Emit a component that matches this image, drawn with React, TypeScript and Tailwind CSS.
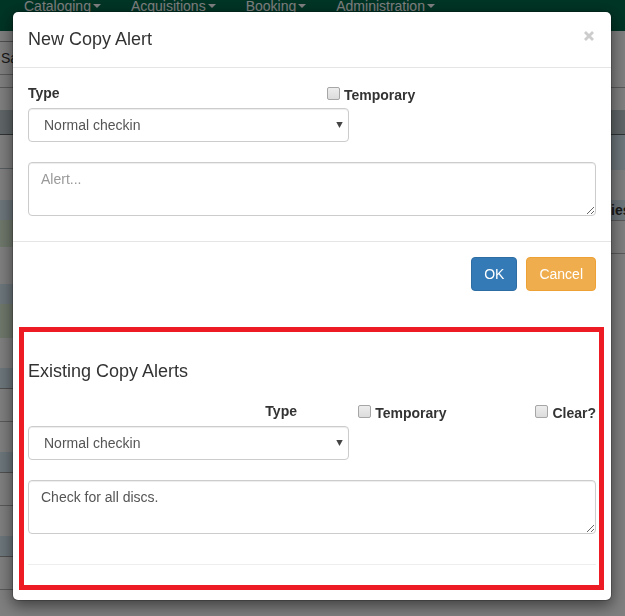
import { useId, useState } from "react";
import clsx from "clsx";

const menus = ["Cataloging", "Acquisitions", "Booking", "Administration"];

const leftBands = [
  "h-[11px] border-b border-[#a0a0a0] bg-white",
  "h-[33px] border-b border-[#b4b4b4] bg-white",
  "h-[13px] border-b border-[#b4b4b4] bg-white",
  "h-[22px] bg-white",
  "h-[25px] border-b border-[#606868] bg-[#bfcccf]",
  "h-[34px] border-b border-[#b0bcc0] bg-white",
  "h-[31px] bg-white",
  "h-5 bg-[#d9edf7]",
  "h-[27px] bg-[#dff0d8]",
  "h-[37px] bg-white",
  "h-5 bg-[#d9edf7]",
  "h-[34px] bg-[#dff0d8]",
  "h-[30px] bg-white",
  "h-[21px] border-b border-[#a0a0a0] bg-[#d9edf7]",
  "h-[33px] border-b border-[#b4b4b4] bg-white",
  "h-[30px] bg-white",
  "h-[21px] border-b border-[#a0a0a0] bg-[#d9edf7]",
  "h-[33px] border-b border-[#b4b4b4] bg-white",
  "h-[30px] bg-white",
  "h-[21px] border-b border-[#a0a0a0] bg-[#d9edf7]",
  "h-[33px] border-b border-[#b4b4b4] bg-white",
];

const rightBands = [
  "h-[57px] border-b border-[#b4b4b4] bg-white",
  "h-[22px] bg-white",
  "h-[25px] border-b border-[#606868] bg-[#bfcccf]",
  "h-[35px] bg-[#d9edf7]",
  "h-[30px] bg-white",
  "h-[21px] border-b border-[#b4b4b4] bg-[#d9edf7]",
  "h-[33px] border-b border-[#b4b4b4] bg-white",
];

function CatalogPage() {
  return (
    <div className="h-screen overflow-hidden bg-white">
      <nav className="flex h-[31px] bg-[#00694b] pl-[9px]">
        {menus.map((name) => (
          <a key={name} href="#" className="-mt-1 flex h-5 items-center gap-0.5 px-[15px] text-white">
            {name}
            <svg width="8" height="4" viewBox="0 0 8 4" fill="currentColor" aria-hidden="true">
              <path d="M0 0h8L4 4z" />
            </svg>
          </a>
        ))}
      </nav>
      <div className="flex">
        <div className="flex-1">
          {leftBands.map((band, i) => (
            <div key={i} className={clsx("flex items-center pl-px", band)}>
              {i === 1 && "Sa"}
            </div>
          ))}
        </div>
        <div className="w-3.5">
          {rightBands.map((band, i) => (
            <div key={i} className={clsx("flex items-center font-bold", band)}>
              {i === 5 && "ies"}
            </div>
          ))}
        </div>
      </div>
    </div>
  );
}

function CheckField({ label }: { label: string }) {
  return (
    <label className="flex gap-1 font-bold">
      <input
        type="checkbox"
        className="mt-1 size-[13px] shrink-0 appearance-none rounded-[2px] border border-[#a6a6a6] bg-linear-to-b from-[#ededed] to-[#dcdcdc] checked:bg-[#337ab7]"
      />
      <span className="mt-0.5">{label}</span>
    </label>
  );
}

function TypeSelect({ id }: { id: string }) {
  return (
    <div className="relative w-[321px] max-w-full">
      <select
        id={id}
        className="block h-[34px] w-full appearance-none rounded-[4px] border border-[#ccc] bg-white pr-6 pl-[15px] text-[#555] shadow-[inset_0_1px_1px_rgba(0,0,0,0.075)]"
      >
        <option>Normal checkin</option>
        <option>Normal checkout</option>
      </select>
      <svg
        className="pointer-events-none absolute top-3.5 right-1.5"
        width="7"
        height="6"
        viewBox="0 0 7 6"
        fill="#444"
        aria-hidden="true"
      >
        <path d="M0.3 0h6.4L3.5 6z" />
      </svg>
    </div>
  );
}

function AlertText({ label, value, onChange }: { label: string; value: string; onChange: (v: string) => void }) {
  return (
    <textarea
      aria-label={label}
      placeholder="Alert..."
      value={value}
      onChange={(e) => onChange(e.target.value)}
      className="mt-5 block h-[54px] w-full rounded-[4px] border border-[#ccc] px-3 py-1.5 text-[#555] shadow-[inset_0_1px_1px_rgba(0,0,0,0.075)] placeholder:text-[#999]"
    />
  );
}

export default function App() {
  const newType = useId();
  const existingType = useId();
  const [alert, setAlert] = useState("");
  const [existing, setExisting] = useState("Check for all discs.");

  return (
    <div className="overflow-hidden font-['Liberation_Sans',Arial,sans-serif] text-[14px] leading-5 text-[#333]">
      <CatalogPage />
      <div className="fixed inset-0 overflow-y-auto bg-black/50 pt-[11px] pr-[13px] pb-4 pl-3">
        <div
          role="dialog"
          aria-label="New Copy Alert"
          className="rounded-[6px] border border-black/20 bg-white bg-clip-padding shadow-[0_5px_15px_rgba(0,0,0,0.5)]"
        >
          <header className="flex items-start justify-between border-b border-[#e5e5e5] p-[15px]">
            <h4 className="text-[18px] leading-[25px]">New Copy Alert</h4>
            <button type="button" aria-label="Close" className="px-0.5 py-1 text-[#ccc]">
              <svg
                width="10"
                height="10"
                viewBox="0 0 10 10"
                stroke="currentColor"
                strokeWidth="2.8"
                className="block"
                aria-hidden="true"
              >
                <path d="M1 1l8 8M9 1l-8 8" />
              </svg>
            </button>
          </header>

          <div className="border-b border-[#e5e5e5] px-[15px] pt-[15px] pb-[25px]">
            <div className="grid h-[25px] grid-cols-2 gap-x-[30px]">
              <label htmlFor={newType} className="font-bold">
                Type
              </label>
              <CheckField label="Temporary" />
            </div>
            <TypeSelect id={newType} />
            <AlertText label="New alert" value={alert} onChange={setAlert} />
          </div>

          <footer className="flex justify-end gap-[9px] p-[15px]">
            <button type="button" className="h-[34px] rounded-[4px] border border-[#2e6da4] bg-[#337ab7] px-3 text-white">
              OK
            </button>
            <button type="button" className="h-[34px] rounded-[4px] border border-[#eea236] bg-[#f0ad4e] px-3 text-white">
              Cancel
            </button>
          </footer>

          <section className="mt-[21px] mr-[7px] mb-2.5 ml-1.5 border-[5px] border-[#ed1c24] pt-[27px] pr-[3px] pb-5 pl-1">
            <h4 className="text-[18px] leading-[25px]">Existing Copy Alerts</h4>
            <div className="mt-[17px] grid h-[25px] grid-cols-4 gap-x-[30px]">
              <label htmlFor={existingType} className="col-span-2 text-right font-bold">
                Type
              </label>
              <div className="flex justify-end">
                <CheckField label="Temporary" />
              </div>
              <div className="flex justify-end">
                <CheckField label="Clear?" />
              </div>
            </div>
            <TypeSelect id={existingType} />
            <AlertText label="Existing alert" value={existing} onChange={setExisting} />
            <hr className="mt-[30px] border-[#eee]" />
          </section>
        </div>
      </div>
    </div>
  );
}
